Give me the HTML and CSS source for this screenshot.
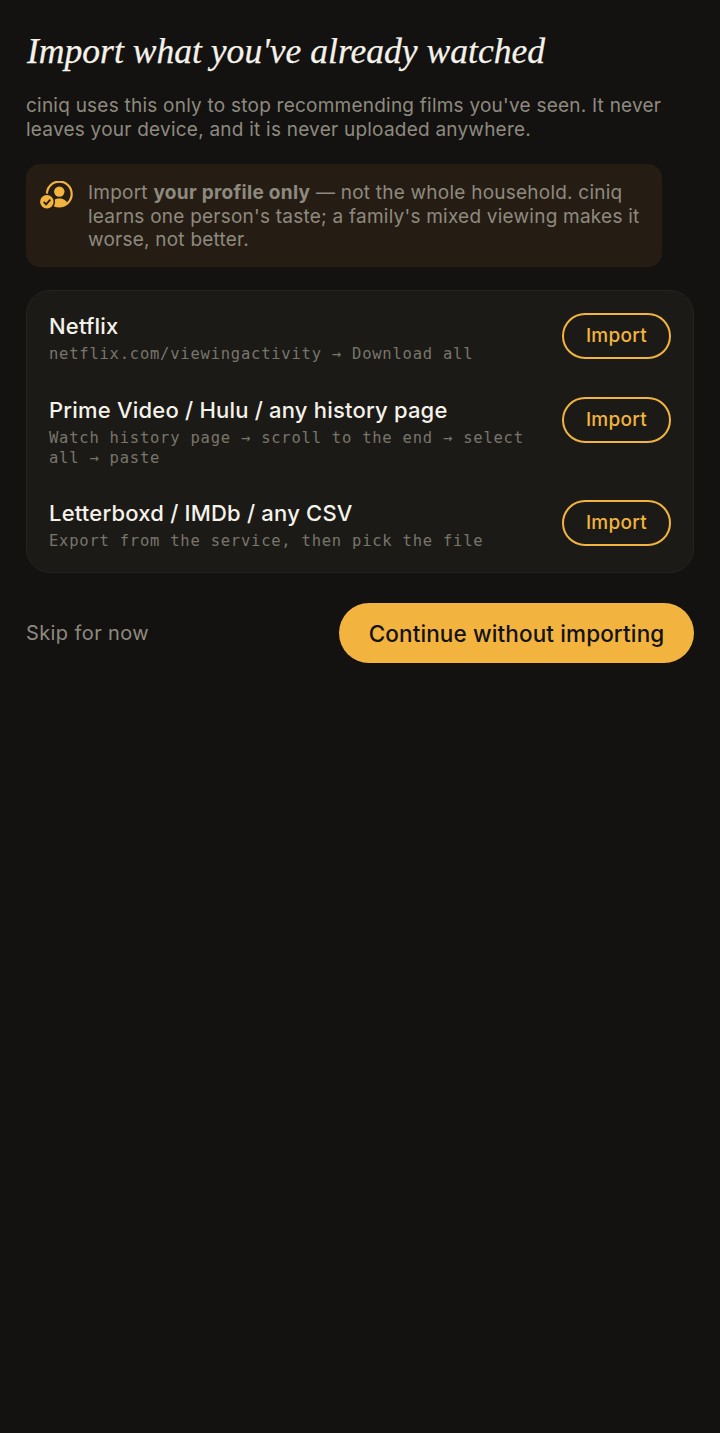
FILE: index.html
```html
<!DOCTYPE html>
<html lang="en">

<head>
  <meta charset="UTF-8">
  <meta name="viewport" content="width=device-width, initial-scale=1.0">
  <title>Import what you've already watched</title>
  <link rel="stylesheet" href="styles.css">
</head>

<body>
  <main>
    <h1>Import what you've already watched</h1>
    <p class="intro">ciniq uses this only to stop recommending films you've seen. It never leaves your device, and it is never uploaded anywhere.</p>

    <div class="notice">
      <svg class="notice-icon" width="34" height="30" viewBox="0 0 34 30">
        <circle cx="19.3" cy="13" r="12.4" fill="none" stroke="#f2b43e" stroke-width="2.2"/>
        <circle cx="19.3" cy="10.6" r="5.2" fill="#f2b43e"/>
        <path d="M11 22.600c1.300-3.800 4.600-5.200 8.300-5.200s7 1.400 8.300 5.200a12.400 12.400 0 0 1-16.600 0z" fill="#f2b43e"/>
        <circle cx="6.900" cy="20.800" r="8.200" fill="#251d14"/>
        <circle cx="6.900" cy="20.800" r="6.800" fill="#f2b43e"/>
        <path d="M3.700 20.900l2.400 2.500 4.200-4.800" fill="none" stroke="#251d14" stroke-width="1.800"/>
      </svg>
      <p>Import <strong>your profile only</strong> — not the whole household. ciniq learns one person's taste; a family's mixed viewing makes it worse, not better.</p>
    </div>

    <section class="sources">
      <div class="source">
        <div class="source-text">
          <h2>Netflix</h2>
          <p>netflix.com/viewingactivity → Download all</p>
        </div>
        <button class="btn-import">Import</button>
      </div>
      <div class="source">
        <div class="source-text">
          <h2>Prime Video / Hulu / any history page</h2>
          <p>Watch history page → scroll to the end → select all → paste</p>
        </div>
        <button class="btn-import">Import</button>
      </div>
      <div class="source">
        <div class="source-text">
          <h2>Letterboxd / IMDb / any CSV</h2>
          <p>Export from the service, then pick the file</p>
        </div>
        <button class="btn-import">Import</button>
      </div>
    </section>

    <div class="actions">
      <button class="btn-skip">Skip for now</button>
      <button class="btn-continue">Continue without importing</button>
    </div>
  </main>
</body>

</html>
```

FILE: styles.css
```css
* {
  padding: 0;
  margin: 0;
  box-sizing: border-box;
}

body {
  font-family: Inter, "Liberation Sans", sans-serif;
  background-color: #131211;
  color: #f5f2ea;
  min-height: 100vh;
}

main {
  padding: 32px 26px;
}

h1 {
  font-family: "Liberation Serif", serif;
  font-style: italic;
  font-weight: 400;
  font-size: 35.6px;
  line-height: 38px;
  color: #f5f2ea;
  margin-left: 1px;
  -webkit-text-stroke: .25px #f5f2ea;
}

.intro {
  margin-top: 24px;
  width: 640px;
  font-size: 19px;
  line-height: 24px;
  letter-spacing: .23px;
  color: #8f8a7f;
}

.notice {
  margin-top: 22px;
  width: 636px;
  padding: 17px 14px 15px;
  display: flex;
  gap: 14px;
  background-color: #251d14;
  border-radius: 14px;
}

.notice-icon {
  flex-shrink: 0;
}

.notice p {
  font-size: 19px;
  line-height: 23.5px;
  letter-spacing: .23px;
  color: #8f8a7f;
}

.notice strong {
  font-weight: 700;
  letter-spacing: .3px;
}

.sources {
  margin-top: 23px;
  background-color: #1b1a17;
  border: 1px solid #24231f;
  border-radius: 24px;
}

.source {
  display: flex;
  justify-content: space-between;
  align-items: flex-start;
  gap: 24px;
  padding: 22px 22px 11px;
}

.source:last-child {
  padding-top: 21px;
  padding-bottom: 21px;
}

.source-text {
  flex: 1;
}

h2 {
  font-size: 22px;
  font-weight: 450;
  line-height: 26px;
  letter-spacing: .2px;
  color: #f5f2ea;
}

.source-text p {
  margin-top: 5px;
  font-family: "DejaVu Sans Mono", monospace;
  font-size: 15.5px;
  line-height: 20px;
  letter-spacing: .77px;
  color: #79756b;
}

.btn-import {
  width: 109px;
  height: 46px;
  flex-shrink: 0;
  background: none;
  border: 2px solid #f2b43e;
  border-radius: 23px;
  color: #f2b43e;
  font-family: inherit;
  font-size: 19px;
  font-weight: 450;
  letter-spacing: .3px;
}

.actions {
  margin-top: 30px;
  display: flex;
  justify-content: space-between;
  align-items: center;
}

.btn-skip {
  background: none;
  border: none;
  color: #8f8a7f;
  font-family: inherit;
  font-size: 20px;
  letter-spacing: .4px;
}

.btn-continue {
  width: 355px;
  height: 60px;
  padding-top: 1px;
  background-color: #f2b43e;
  border: none;
  border-radius: 30px;
  color: #131211;
  font-family: inherit;
  font-size: 22.5px;
  font-weight: 450;
  letter-spacing: .12px;
}
```
